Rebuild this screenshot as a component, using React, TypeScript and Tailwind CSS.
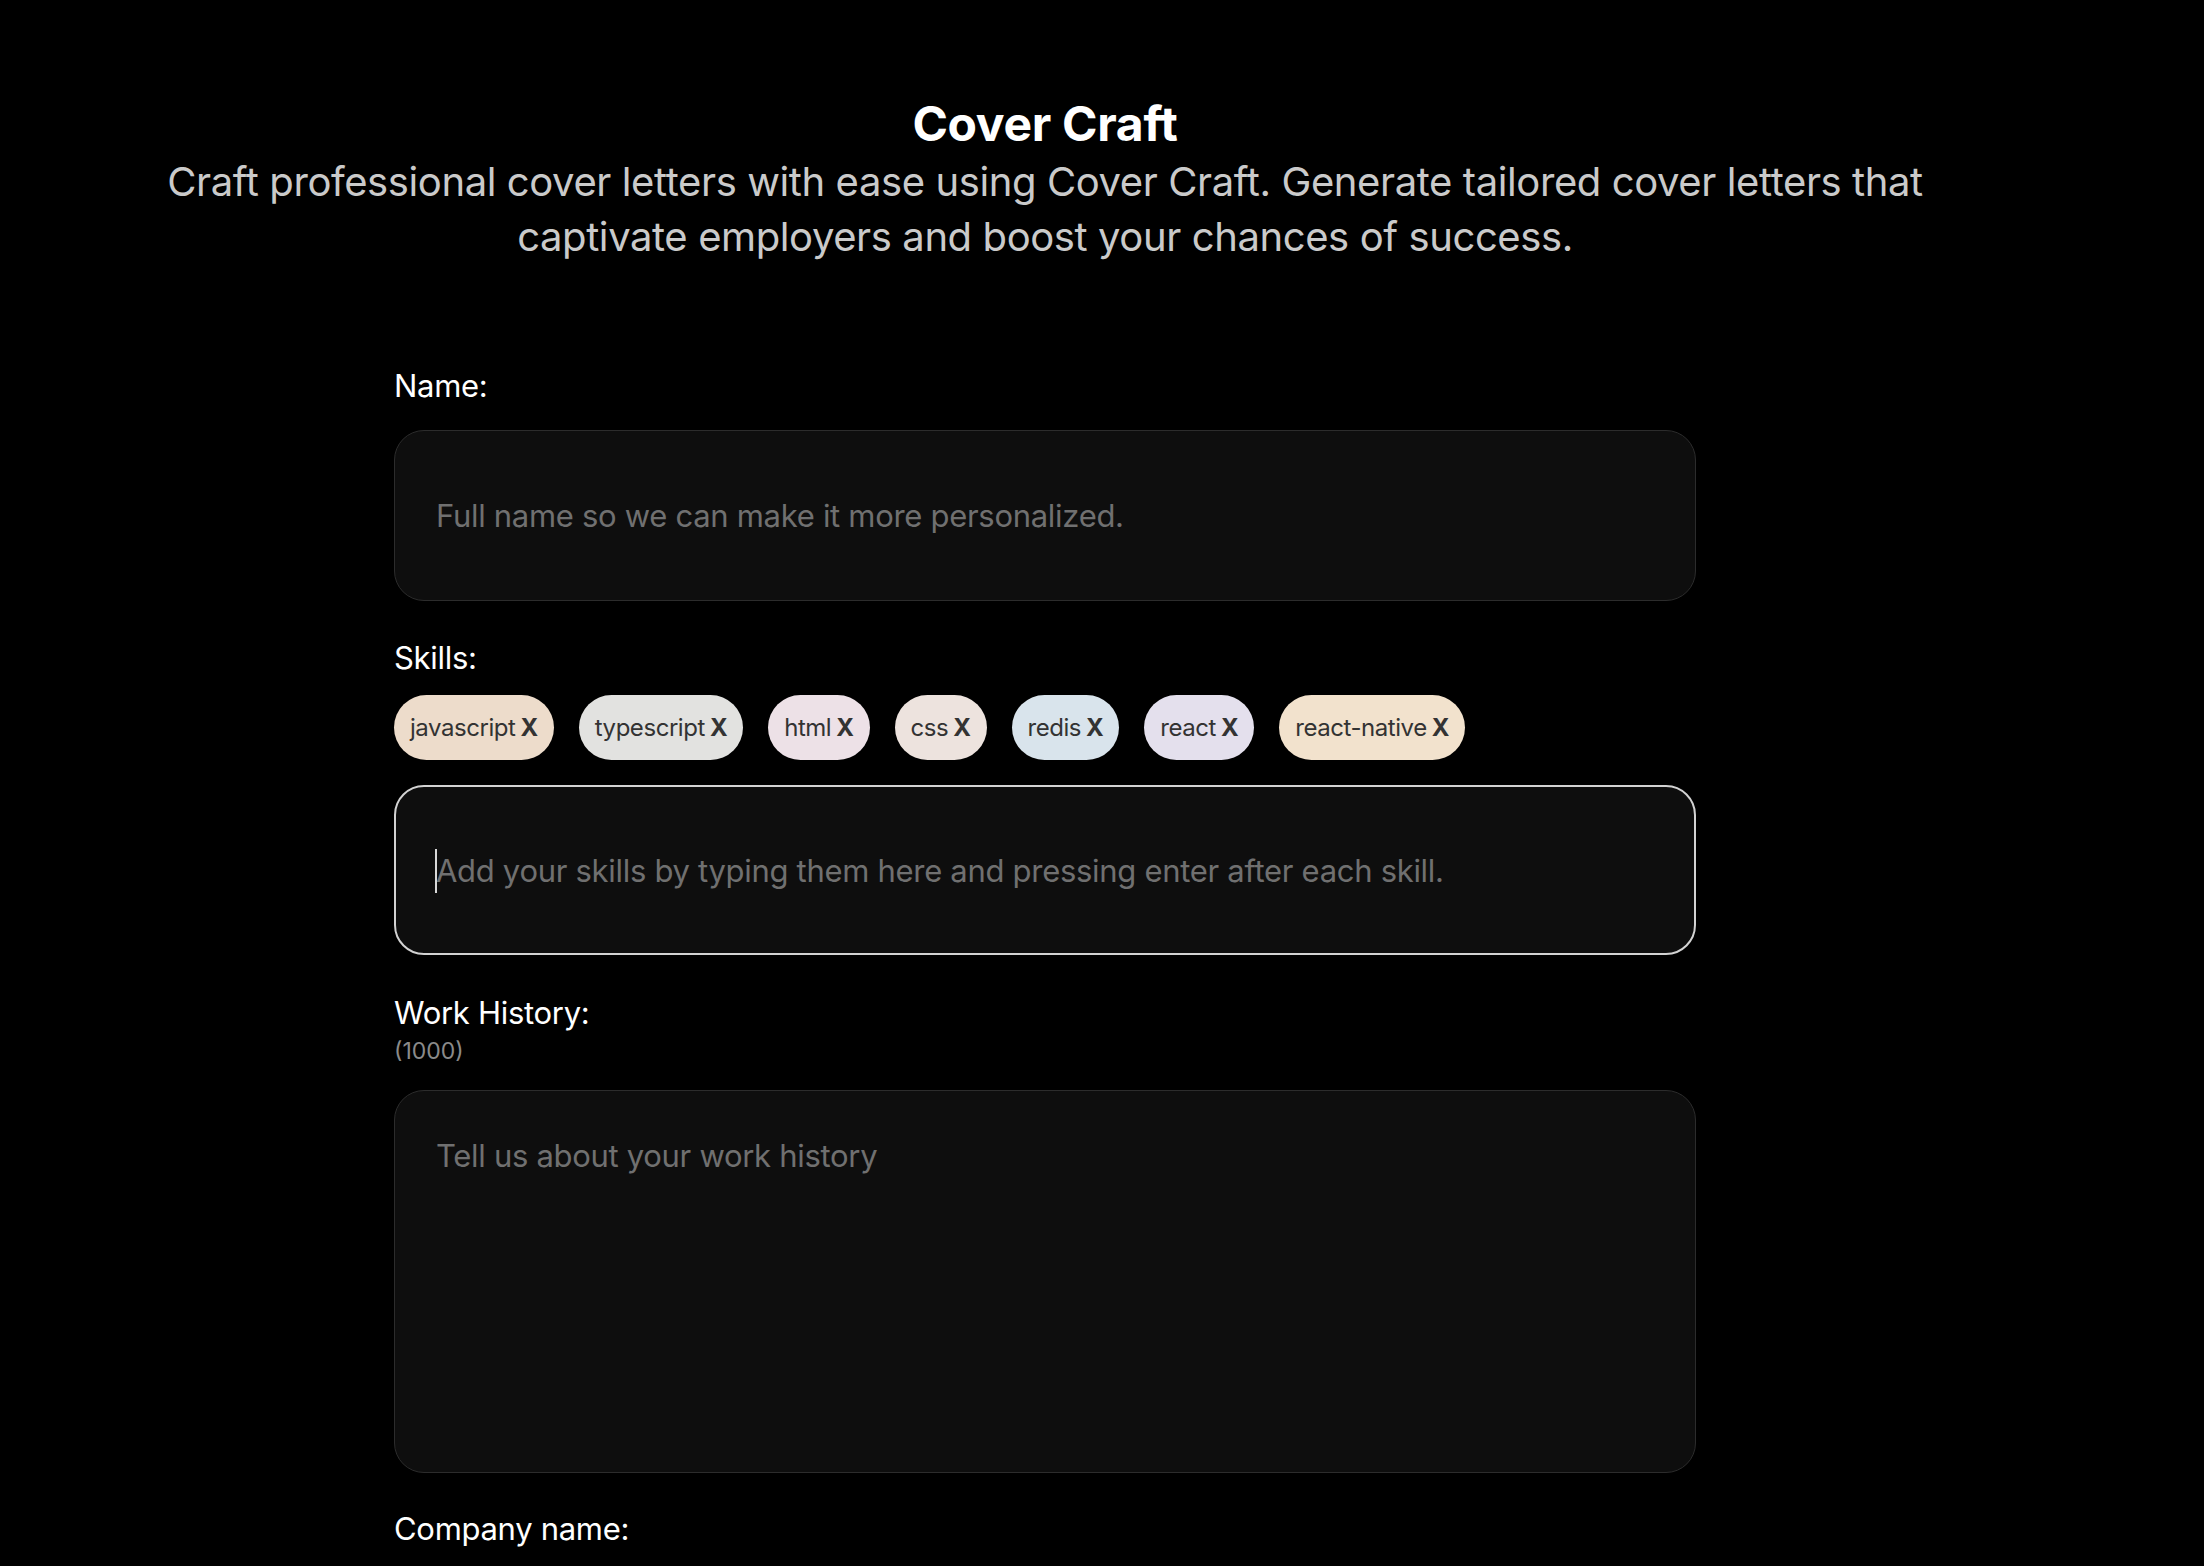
import React from "react";

const skills: { name: string; bg: string }[] = [
  { name: "javascript", bg: "bg-[#eddccb]" },
  { name: "typescript", bg: "bg-[#e2e2e0]" },
  { name: "html", bg: "bg-[#ede1e7]" },
  { name: "css", bg: "bg-[#ede3de]" },
  { name: "redis", bg: "bg-[#d9e4ec]" },
  { name: "react", bg: "bg-[#e4e0ed]" },
  { name: "react-native", bg: "bg-[#f2e2cd]" },
];

export default function App() {
  return (
    <div
      className="h-screen overflow-hidden bg-black text-white"
      style={{ fontFamily: "Inter, 'Noto Sans', 'Liberation Sans', sans-serif" }}
    >
      <div className="w-[2090px] pt-[97px]">
        <h1 className="text-center text-[48px] font-bold leading-[54px] tracking-[-0.3px] text-white">
          Cover Craft
        </h1>
        <p className="mt-[3px] text-center text-[40px] leading-[55px] tracking-[-0.4px] text-[#cacaca]">
          Craft professional cover letters with ease using Cover Craft. Generate tailored cover letters that
          <br />
          captivate employers and boost your chances of success.
        </p>

        <form className="mx-auto mt-[99px] flex w-[1302px] flex-col">
          <label className="text-[31px] leading-[45px] tracking-[-0.3px] text-white">Name:</label>
          <input
            type="text"
            placeholder="Full name so we can make it more personalized."
            className="mt-[22px] h-[171px] w-full rounded-[30px] border border-[#2c2c2c] bg-[#0e0e0e] px-[41px] text-[31px] tracking-[-0.3px] text-white outline-none placeholder:text-[#707070]"
          />

          <label className="mt-[34px] text-[31px] leading-[45px] tracking-[-0.3px] text-white">Skills:</label>
          <div className="mt-[15px] flex flex-wrap gap-[25px]">
            {skills.map((s) => (
              <span
                key={s.name}
                className={`inline-flex h-[65px] items-center rounded-full px-[16px] text-[24px] tracking-[-0.45px] text-[#333333] ${s.bg}`}
              >
                {s.name}
                <b className="ml-[5px] font-bold text-[#333333]">X</b>
              </span>
            ))}
          </div>
          <div className="relative mt-[25px]">
            <input
              type="text"
              placeholder="Add your skills by typing them here and pressing enter after each skill."
              className="h-[170px] w-full rounded-[30px] border-2 border-[#d2d2d2] bg-[#0e0e0e] px-[40px] text-[31px] tracking-[-0.3px] text-white outline-none placeholder:text-[#707070]"
            />
            <span className="pointer-events-none absolute left-[41px] top-[64px] h-[44px] w-[2px] bg-[#d8d8d8]" />
          </div>

          <label className="mt-[35px] text-[31px] leading-[45px] tracking-[-0.3px] text-white">Work History:</label>
          <span className="mt-[2px] text-[23px] leading-[28px] text-[#8a8a8a]">(1000)</span>
          <textarea
            placeholder="Tell us about your work history"
            className="mt-[25px] h-[383px] w-full resize-none rounded-[30px] border border-[#2c2c2c] bg-[#0e0e0e] px-[41px] pt-[41px] text-[31px] leading-[48px] tracking-[-0.3px] text-white outline-none placeholder:text-[#707070]"
          />

          <label className="mt-[33px] text-[31px] leading-[45px] tracking-[-0.3px] text-white">Company name:</label>
          <input
            type="text"
            placeholder="Company name"
            className="mt-[22px] h-[171px] w-full rounded-[30px] border border-[#2c2c2c] bg-[#0e0e0e] px-[41px] text-[31px] text-white outline-none placeholder:text-[#707070]"
          />
        </form>
      </div>
    </div>
  );
}
